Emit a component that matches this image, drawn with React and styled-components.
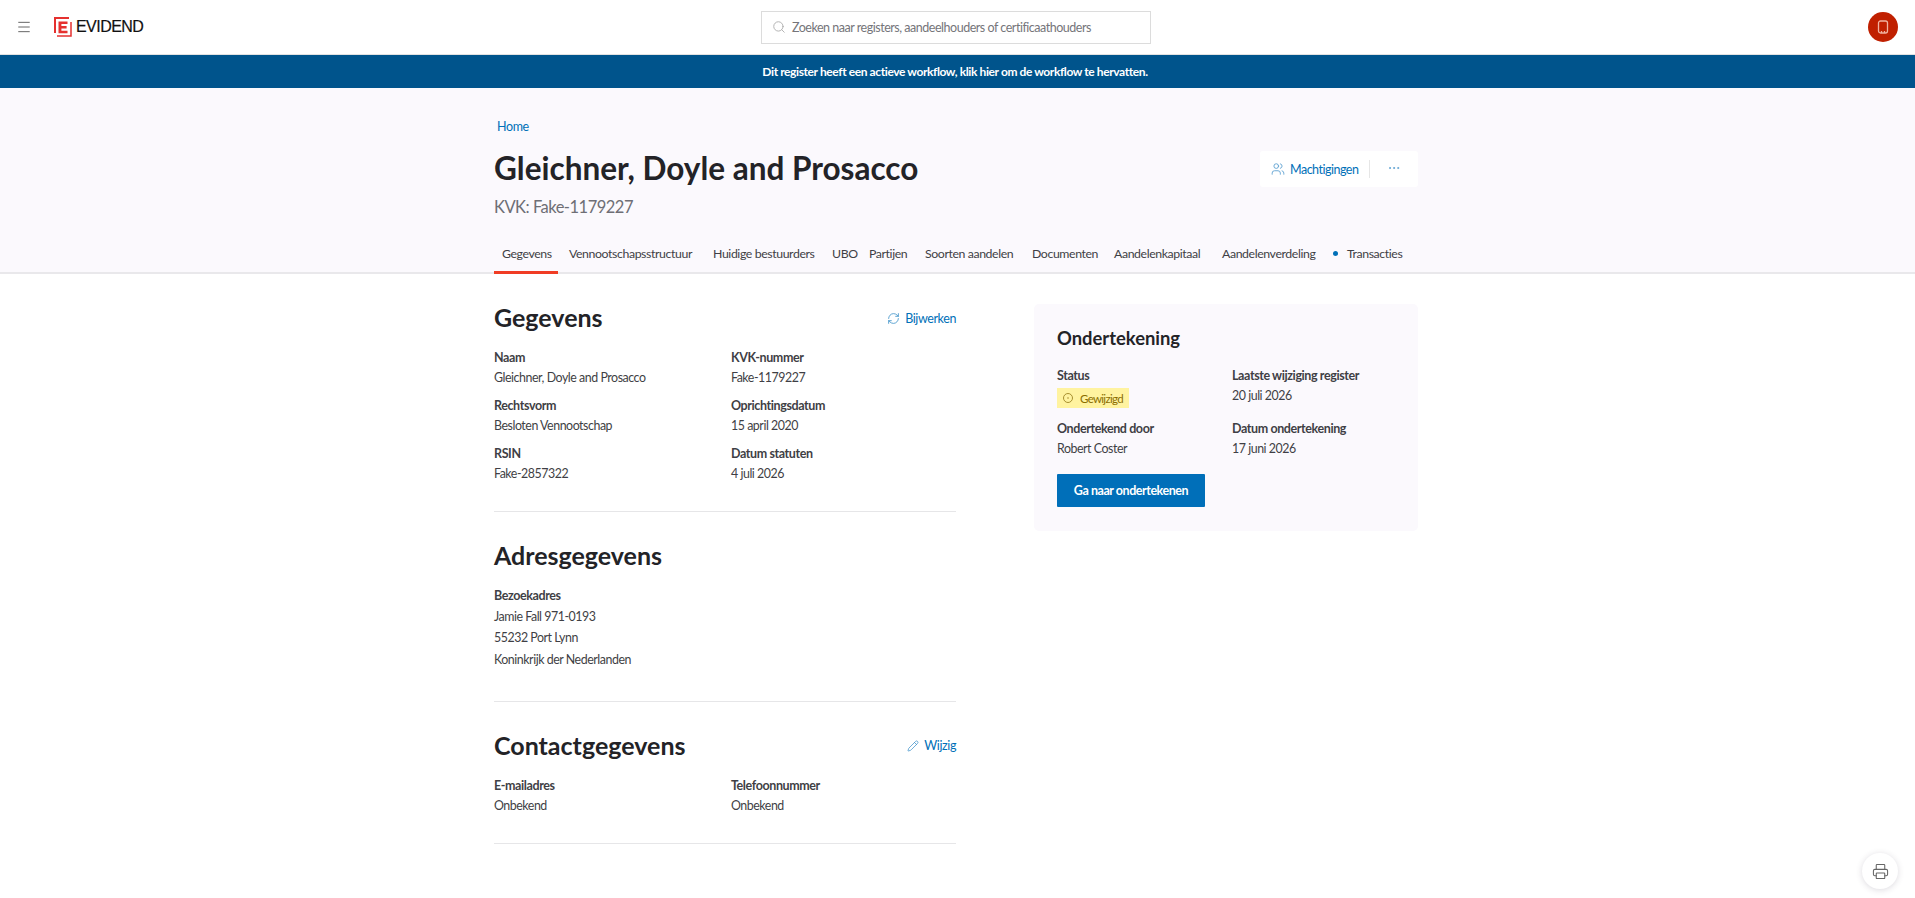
import React from 'react';
import styled, { createGlobalStyle } from 'styled-components';
import { Menu, Search, Users, RefreshCw, Pencil, Printer, MoreHorizontal } from 'lucide-react';

const GlobalStyle = createGlobalStyle`
    html, body {
        margin: 0;
        padding: 0;
        background: #fff;
        font-family: "Lato", "Noto Sans", sans-serif;
        font-size: 12.5px;
        letter-spacing: -0.4px;
        color: #3a3a3f;
    }
    * { box-sizing: border-box; }
`

const Header = styled.header`
    display: grid;
    grid-template-columns: 1fr 390px 1fr;
    align-items: center;
    height: 55px;
    padding: 0 17px 0 14px;
    background: #fff;
    border-bottom: 1px solid #e2e2e2;
`

const HeaderLeft = styled.div`
    display: flex;
    align-items: center;
    color: #666;
`

const MenuButton = styled.div`
    display: flex;
    margin-left: 2px;
    margin-right: 22px;
`

const LogoText = styled.span`
    margin-left: 4px;
    font-family: "Liberation Sans", sans-serif;
    font-size: 16px;
    letter-spacing: -0.55px;
    -webkit-text-stroke: 0.2px #111;
    color: #111;
`

const SearchBox = styled.div`
    display: flex;
    align-items: center;
    gap: 6px;
    height: 33px;
    padding: 0 10px;
    border: 1px solid #dcdcdc;
    color: #75757a;
    background: #fff;
    letter-spacing: -0.48px;
    svg { color: #aaa; }
`

const Avatar = styled.div`
    justify-self: end;
    display: flex;
    align-items: center;
    justify-content: center;
    width: 30px;
    height: 30px;
    border-radius: 50%;
    background: #c02000;
`

const Banner = styled.div`
    height: 33px;
    line-height: 33px;
    padding-right: 5px;
    text-align: center;
    background: #00548c;
    color: #fff;
    font-size: 12px;
    font-weight: 700;
`

const Hero = styled.section`
    background: #fbf9fd;
    border-bottom: 2px solid #e9e8eb;
`

const HeroInner = styled.div`
    width: 924px;
    padding-top: 29px;
    margin-left: 494px;
`

const Crumb = styled.a`
    display: block;
    margin-left: 3px;
    line-height: 20px;
    color: #0070b8;
`

const TitleRow = styled.div`
    display: flex;
    justify-content: space-between;
    align-items: flex-start;
`

const Title = styled.h1`
    margin: 9px 0 0;
    font-size: 31.5px;
    line-height: 44px;
    font-weight: 700;
    letter-spacing: 0;
    color: #232327;
`

const Subtitle = styled.div`
    margin-top: 3px;
    font-size: 16.5px;
    line-height: 28px;
    letter-spacing: -0.5px;
    color: #6e6e75;
`

const Actions = styled.div`
    display: flex;
    align-items: center;
    height: 36px;
    margin-top: 14px;
    width: 158px;
    background: #fff;
    border-radius: 3px;
    color: #0070b8;
`

const ActionLink = styled.div`
    display: flex;
    align-items: center;
    gap: 5px;
    width: 110px;
    height: 18px;
    padding-left: 11px;
    border-right: 1px solid #e6e6e6;
    white-space: nowrap;
    letter-spacing: -0.5px;
    svg { color: #5a9fd0; }
`

const ActionMore = styled.div`
    display: flex;
    flex: 1;
    justify-content: center;
    margin-top: -3px;
    color: #5a9fd0;
`

const Tabs = styled.nav`
    display: flex;
    gap: 3px;
    margin-top: 20px;
    margin-bottom: -2px;
`

const Tab = styled.div`
    flex: none;
    display: flex;
    align-items: center;
    width: ${p => p.$w}px;
    height: 33px;
    padding: 0 0 6px 8px;
    font-size: 12.3px;
    white-space: nowrap;
    color: #3f3f45;
    border-bottom: 3px solid ${p => (p.$active ? '#f03c24' : 'transparent')};
`

const Dot = styled.span`
    width: 5px;
    height: 5px;
    margin: 0 9px 0 -4px;
    border-radius: 50%;
    background: #0070b8;
`

const Main = styled.main`
    display: grid;
    grid-template-columns: 462px 384px;
    column-gap: 78px;
    align-items: start;
    margin-left: 494px;
    padding-top: 26px;
`

const Section = styled.section`
    padding-bottom: ${p => p.$pb}px;
    margin-bottom: 26px;
    border-bottom: 1px solid #e6e6e8;
`

const SectionHead = styled.div`
    display: flex;
    justify-content: space-between;
    align-items: center;
    height: 36px;
    margin-bottom: 12px;
`

const Heading = styled.h2`
    margin: 0;
    padding-bottom: 2px;
    font-size: 25px;
    line-height: 34px;
    font-weight: 700;
    letter-spacing: 0;
    color: #232327;
`

const HeadLink = styled.a`
    display: flex;
    align-items: center;
    gap: 5px;
    color: #0070b8;
    svg { color: #3f92c9; }
`

const Fields = styled.div`
    display: grid;
    grid-template-columns: 237px 1fr;
    row-gap: 8px;
`

const Field = styled.div`
    display: flex;
    flex-direction: column;
`

const Label = styled.div`
    line-height: 20px;
    font-weight: 700;
    color: #3f3f45;
`

const Value = styled.div`
    font-size: 12.4px;
    line-height: 20px;
    letter-spacing: -0.46px;
    color: #3f3f45;
`

const AddressLine = styled.div`
    font-size: 12.4px;
    line-height: 21.3px;
    letter-spacing: -0.46px;
    color: #3f3f45;
`

const Card = styled.aside`
    margin-top: 4px;
    padding: 21px 23px 24px;
    background: #fbf9fd;
    border-radius: 5px;
`

const CardHeading = styled.h3`
    margin: 0 0 13px;
    padding-bottom: 2px;
    font-size: 18.4px;
    line-height: 26px;
    font-weight: 700;
    letter-spacing: 0;
    color: #232327;
`

const CardFields = styled.div`
    display: grid;
    grid-template-columns: 175px 1fr;
    row-gap: 11px;
`

const Badge = styled.div`
    display: flex;
    align-items: center;
    gap: 6px;
    align-self: flex-start;
    height: 20px;
    margin-top: 2px;
    padding: 0 6px 0 5px;
    background: #fff3a0;
    color: #8a6d00;
    font-size: 11.5px;
    letter-spacing: -0.7px;
`

const PrimaryButton = styled.button`
    display: block;
    width: 148px;
    height: 33px;
    margin-top: 15px;
    padding: 0;
    border: 0;
    border-radius: 1px;
    background: #006fb9;
    color: #fff;
    font-family: inherit;
    font-size: 12.5px;
    letter-spacing: -0.45px;
    font-weight: 700;
`

const PrintButton = styled.div`
    position: fixed;
    left: 1862px;
    top: 853px;
    display: flex;
    align-items: center;
    justify-content: center;
    width: 36px;
    height: 36px;
    border-radius: 50%;
    background: #fff;
    box-shadow: 0 1px 6px rgba(60, 50, 80, 0.18);
    color: #666;
`

const tabs = [
    { label: 'Gegevens', w: 64, active: true },
    { label: 'Vennootschapsstructuur', w: 141 },
    { label: 'Huidige bestuurders', w: 116 },
    { label: 'UBO', w: 34 },
    { label: 'Partijen', w: 53 },
    { label: 'Soorten aandelen', w: 104 },
    { label: 'Documenten', w: 79 },
    { label: 'Aandelenkapitaal', w: 105 },
    { label: 'Aandelenverdeling', w: 112 },
    { label: 'Transacties', w: 86, dot: true },
];

const Logo = () => (
    <svg width="18" height="20" viewBox="0 0 18 20" fill="none">
        <path d="M15 1H1v15" stroke="#e5312f" strokeWidth="2" />
        <path d="M3 19h14V5" stroke="#e5312f" strokeWidth="1.5" />
        <path d="M4.5 4.5h9v2.6H7.4v2h5.2v2.4H7.4v2.2h6.1v2.6h-9z" fill="#e5312f" />
    </svg>
);

const AvatarIcon = () => (
    <svg width="12" height="14" viewBox="0 0 12 14" fill="none">
        <rect x="1.5" y="1" width="9" height="12" rx="2" stroke="#f0b3a0" strokeWidth="1.3" />
        <path d="M4.5 11v2M7.5 11v2" stroke="#f0b3a0" strokeWidth="1.3" />
    </svg>
);

const StatusIcon = () => (
    <svg width="12" height="12" viewBox="0 0 12 12" fill="none">
        <circle cx="6" cy="6" r="4.5" stroke="#a89030" />
        <circle cx="6" cy="6" r="0.8" fill="#a89030" />
    </svg>
);

const App = () => {
    return (
        <>
            <GlobalStyle />
            <Header>
                <HeaderLeft>
                    <MenuButton><Menu size={16} strokeWidth={1.5} /></MenuButton>
                    <Logo />
                    <LogoText>EVIDEND</LogoText>
                </HeaderLeft>
                <SearchBox>
                    <Search size={14} strokeWidth={1.5} />
                    Zoeken naar registers, aandeelhouders of certificaathouders
                </SearchBox>
                <Avatar><AvatarIcon /></Avatar>
            </Header>

            <Banner>Dit register heeft een actieve workflow, klik hier om de workflow te hervatten.</Banner>

            <Hero>
                <HeroInner>
                    <Crumb>Home</Crumb>
                    <TitleRow>
                        <div>
                            <Title>Gleichner, Doyle and Prosacco</Title>
                            <Subtitle>KVK: Fake-1179227</Subtitle>
                        </div>
                        <Actions>
                            <ActionLink><Users size={14} strokeWidth={1.5} />Machtigingen</ActionLink>
                            <ActionMore><MoreHorizontal size={14} strokeWidth={1.5} /></ActionMore>
                        </Actions>
                    </TitleRow>
                    <Tabs>
                        {tabs.map(t => (
                            <Tab key={t.label} $w={t.w} $active={t.active}>
                                {t.dot && <Dot />}
                                {t.label}
                            </Tab>
                        ))}
                    </Tabs>
                </HeroInner>
            </Hero>

            <Main>
                <div>
                    <Section $pb={27}>
                        <SectionHead>
                            <Heading>Gegevens</Heading>
                            <HeadLink><RefreshCw size={13} strokeWidth={1.5} />Bijwerken</HeadLink>
                        </SectionHead>
                        <Fields>
                            <Field><Label>Naam</Label><Value>Gleichner, Doyle and Prosacco</Value></Field>
                            <Field><Label>KVK-nummer</Label><Value>Fake-1179227</Value></Field>
                            <Field><Label>Rechtsvorm</Label><Value>Besloten Vennootschap</Value></Field>
                            <Field><Label>Oprichtingsdatum</Label><Value>15 april 2020</Value></Field>
                            <Field><Label>RSIN</Label><Value>Fake-2857322</Value></Field>
                            <Field><Label>Datum statuten</Label><Value>4 juli 2026</Value></Field>
                        </Fields>
                    </Section>

                    <Section $pb={31}>
                        <SectionHead>
                            <Heading>Adresgegevens</Heading>
                        </SectionHead>
                        <Field>
                            <Label>Bezoekadres</Label>
                            <div>
                                <AddressLine>Jamie Fall 971-0193</AddressLine>
                                <AddressLine>55232 Port Lynn</AddressLine>
                                <AddressLine>Koninkrijk der Nederlanden</AddressLine>
                            </div>
                        </Field>
                    </Section>

                    <Section $pb={27}>
                        <SectionHead>
                            <Heading>Contactgegevens</Heading>
                            <HeadLink><Pencil size={12} strokeWidth={1.5} />Wijzig</HeadLink>
                        </SectionHead>
                        <Fields>
                            <Field><Label>E-mailadres</Label><Value>Onbekend</Value></Field>
                            <Field><Label>Telefoonnummer</Label><Value>Onbekend</Value></Field>
                        </Fields>
                    </Section>
                </div>

                <Card>
                    <CardHeading>Ondertekening</CardHeading>
                    <CardFields>
                        <Field>
                            <Label>Status</Label>
                            <Badge><StatusIcon />Gewijzigd</Badge>
                        </Field>
                        <Field><Label>Laatste wijziging register</Label><Value>20 juli 2026</Value></Field>
                        <Field><Label>Ondertekend door</Label><Value>Robert Coster</Value></Field>
                        <Field><Label>Datum ondertekening</Label><Value>17 juni 2026</Value></Field>
                    </CardFields>
                    <PrimaryButton>Ga naar ondertekenen</PrimaryButton>
                </Card>
            </Main>

            <PrintButton><Printer size={17} strokeWidth={1.5} /></PrintButton>
        </>
    );
};

export default App;
